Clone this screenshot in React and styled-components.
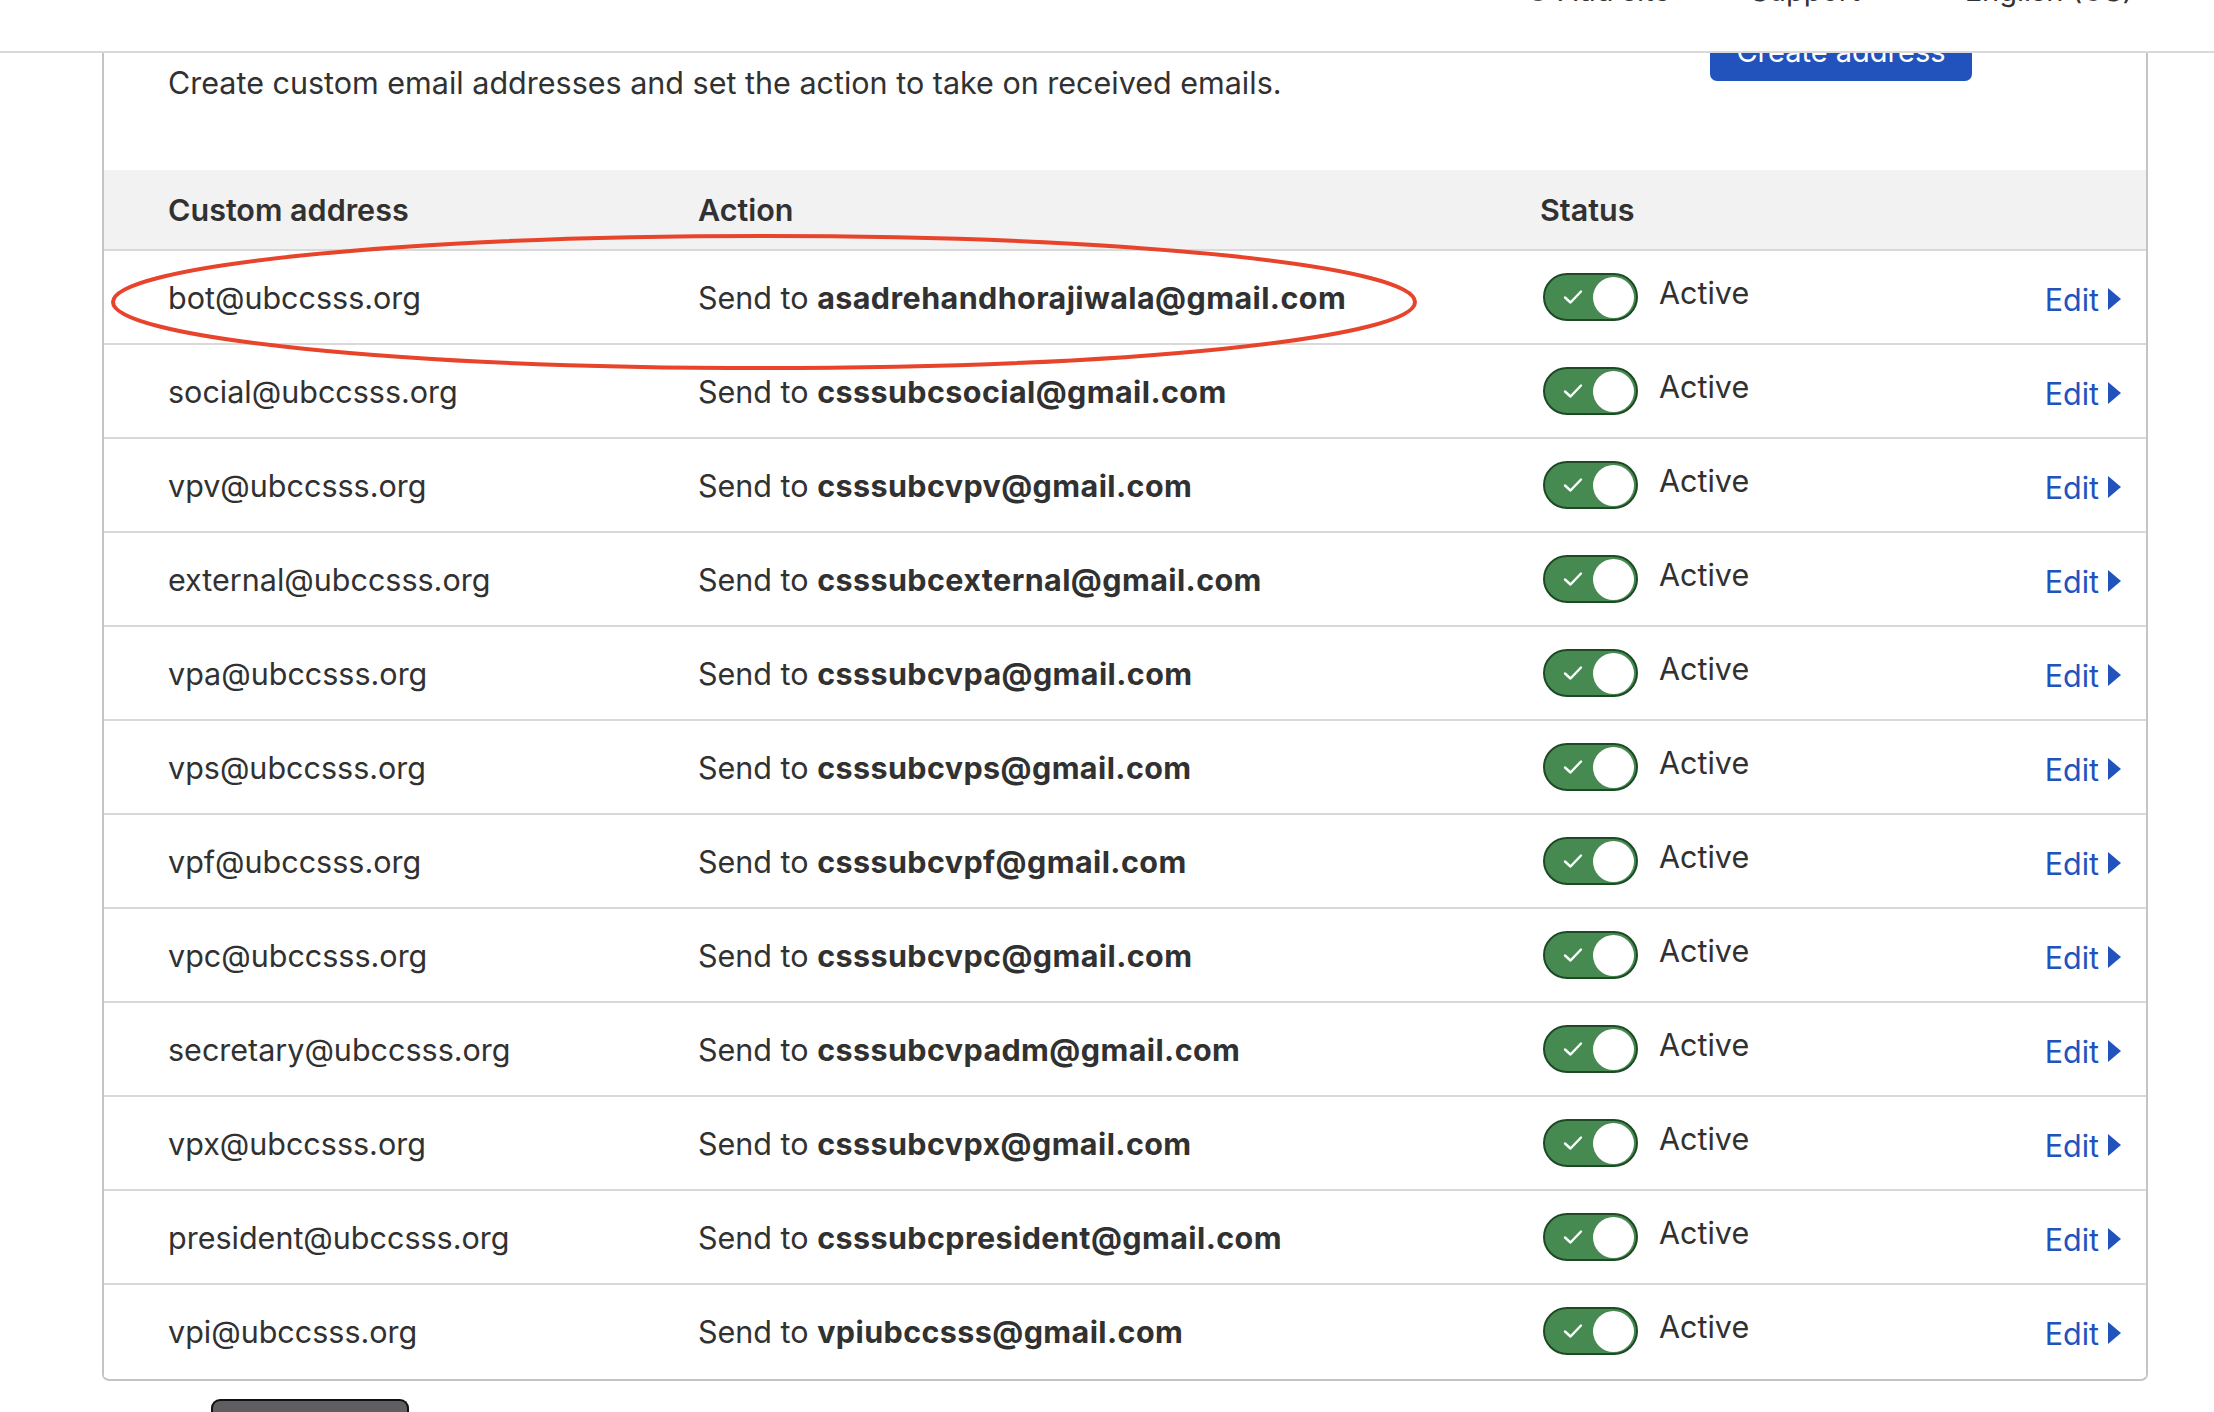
import React from 'react';
import styled, { createGlobalStyle } from 'styled-components';

const GlobalStyle = createGlobalStyle`
  html, body {
    margin: 0;
    padding: 0;
    background: #fff;
  }
  body {
    font-family: Inter, 'Noto Sans', 'Liberation Sans', sans-serif;
    color: #313131;
    -webkit-font-smoothing: antialiased;
  }
`;

const TopNav = styled.div`
  position: fixed;
  top: 0;
  left: 0;
  right: 0;
  height: 51px;
  background: #fff;
  border-bottom: 2px solid #d9d9d9;
  overflow: hidden;
  z-index: 10;
`;

const NavItems = styled.div`
  display: flex;
  align-items: center;
  justify-content: flex-end;
  padding-right: 81px;
  margin-top: -27px;
  font-size: 29px;
  line-height: 36px;
  color: #333;
`;

const NavItem = styled.span`
  display: flex;
  align-items: center;
  gap: 9px;
  margin-left: ${(p) => p.$space || 0}px;
`;

const Page = styled.div`
  padding: 0 66px 40px 102px;
`;

const Card = styled.div`
  position: relative;
  border: 2px solid #c4c4c4;
  border-top: none;
  border-radius: 0 0 7px 7px;
  padding-bottom: 2px;
  background: #fff;
`;

const Intro = styled.div`
  display: flex;
  justify-content: space-between;
  align-items: flex-start;
  height: 170px;
  padding: 0 174px 0 64px;
`;

const Description = styled.p`
  margin: 63px 0 0;
  font-size: 30.5px;
  line-height: 40px;
  color: #313131;
`;

const PrimaryButton = styled.button`
  margin-top: 21px;
  width: 262px;
  height: 60px;
  border: none;
  border-radius: 7px;
  background: #2253bd;
  color: #fff;
  font-family: inherit;
  font-size: 29px;
`;

const Row = styled.div`
  position: relative;
  display: grid;
  grid-template-columns: 530px 842px 1fr auto;
  align-items: center;
  height: ${(p) => (p.$head ? '79px' : '92px')};
  padding: 0 24px 0 64px;
  background: ${(p) => (p.$head ? '#f2f2f2' : '#fff')};
  border-bottom: 2px solid #d9d9d9;
  font-size: 30.5px;
  font-weight: ${(p) => (p.$head ? 600 : 400)};

  &:last-child {
    border-bottom: none;
  }
`;

const Cell = styled.div`
  white-space: nowrap;
`;

const Target = styled.b`
  font-weight: 700;
  letter-spacing: 0.4px;
`;

const StatusCell = styled.div`
  display: flex;
  align-items: center;
  gap: 21px;
  margin-left: 3px;
`;

const Toggle = styled.div`
  position: relative;
  box-sizing: border-box;
  width: 95px;
  height: 48px;
  border-radius: 24px;
  background: #468a52;
  border: 2px solid #1d4a24;
  display: flex;
  align-items: center;
  justify-content: space-between;
  padding: 0 2px 0 18px;
`;

const Knob = styled.div`
  width: 41px;
  height: 41px;
  border-radius: 50%;
  background: #fff;
`;

const StatusText = styled.span`
  margin-top: -9px;
`;

const EditLink = styled.a`
  display: flex;
  align-items: center;
  gap: 8px;
  margin-top: 4px;
  color: #2253bd;
  text-decoration: none;
`;

const Mark = styled.svg`
  position: absolute;
  left: 6px;
  top: -16px;
  overflow: visible;
  pointer-events: none;
  z-index: 5;
`;

const Footer = styled.div`
  padding: 18px 0 0 109px;
`;

const DarkButton = styled.div`
  width: 198px;
  height: 40px;
  border: 2px solid #111;
  border-bottom: none;
  border-radius: 9px 9px 0 0;
  background: #5f5f63;
  box-sizing: border-box;
`;

const rows = [
  ['bot@ubccsss.org', 'asadrehandhorajiwala@gmail.com'],
  ['social@ubccsss.org', 'csssubcsocial@gmail.com'],
  ['vpv@ubccsss.org', 'csssubcvpv@gmail.com'],
  ['external@ubccsss.org', 'csssubcexternal@gmail.com'],
  ['vpa@ubccsss.org', 'csssubcvpa@gmail.com'],
  ['vps@ubccsss.org', 'csssubcvps@gmail.com'],
  ['vpf@ubccsss.org', 'csssubcvpf@gmail.com'],
  ['vpc@ubccsss.org', 'csssubcvpc@gmail.com'],
  ['secretary@ubccsss.org', 'csssubcvpadm@gmail.com'],
  ['vpx@ubccsss.org', 'csssubcvpx@gmail.com'],
  ['president@ubccsss.org', 'csssubcpresident@gmail.com'],
  ['vpi@ubccsss.org', 'vpiubccsss@gmail.com'],
];

const Check = () => (
  <svg width="20" height="16" viewBox="0 0 20 16">
    <path d="M2 8.5 L7.5 13.5 L18 2.5" fill="none" stroke="#fff" strokeWidth="2.4" strokeLinecap="round" strokeLinejoin="round" />
  </svg>
);

const Caret = () => (
  <svg width="15" height="24" viewBox="0 0 15 24">
    <path d="M1 1 L14 12 L1 23 Z" fill="#2253bd" />
  </svg>
);

const Highlight = () => (
  <Mark width="1310" height="136" viewBox="0 0 1310 136">
    <ellipse cx="654" cy="67" rx="651" ry="66" fill="none" stroke="#e8432b" strokeWidth="4" />
  </Mark>
);

export default function App() {
  return (
    <>
      <GlobalStyle />
      <TopNav>
        <NavItems>
          <NavItem>
            <svg width="22" height="22" viewBox="0 0 22 22">
              <circle cx="11" cy="11" r="10" fill="#444" />
            </svg>
            Add site
          </NavItem>
          <NavItem $space={80}>Support</NavItem>
          <NavItem $space={105}>English (US)</NavItem>
        </NavItems>
      </TopNav>
      <Page>
        <Card>
          <Intro>
            <Description>
              Create custom email addresses and set the action to take on received emails.
            </Description>
            <PrimaryButton>Create address</PrimaryButton>
          </Intro>
          <Row $head>
            <Cell>Custom address</Cell>
            <Cell>Action</Cell>
            <Cell>Status</Cell>
            <Cell />
          </Row>
          {rows.map(([address, target], i) => (
            <Row key={address}>
              {i === 0 && <Highlight />}
              <Cell>{address}</Cell>
              <Cell>
                Send to <Target>{target}</Target>
              </Cell>
              <StatusCell>
                <Toggle>
                  <Check />
                  <Knob />
                </Toggle>
                <StatusText>Active</StatusText>
              </StatusCell>
              <EditLink href="#">
                Edit
                <Caret />
              </EditLink>
            </Row>
          ))}
        </Card>
        <Footer>
          <DarkButton />
        </Footer>
      </Page>
    </>
  );
}
